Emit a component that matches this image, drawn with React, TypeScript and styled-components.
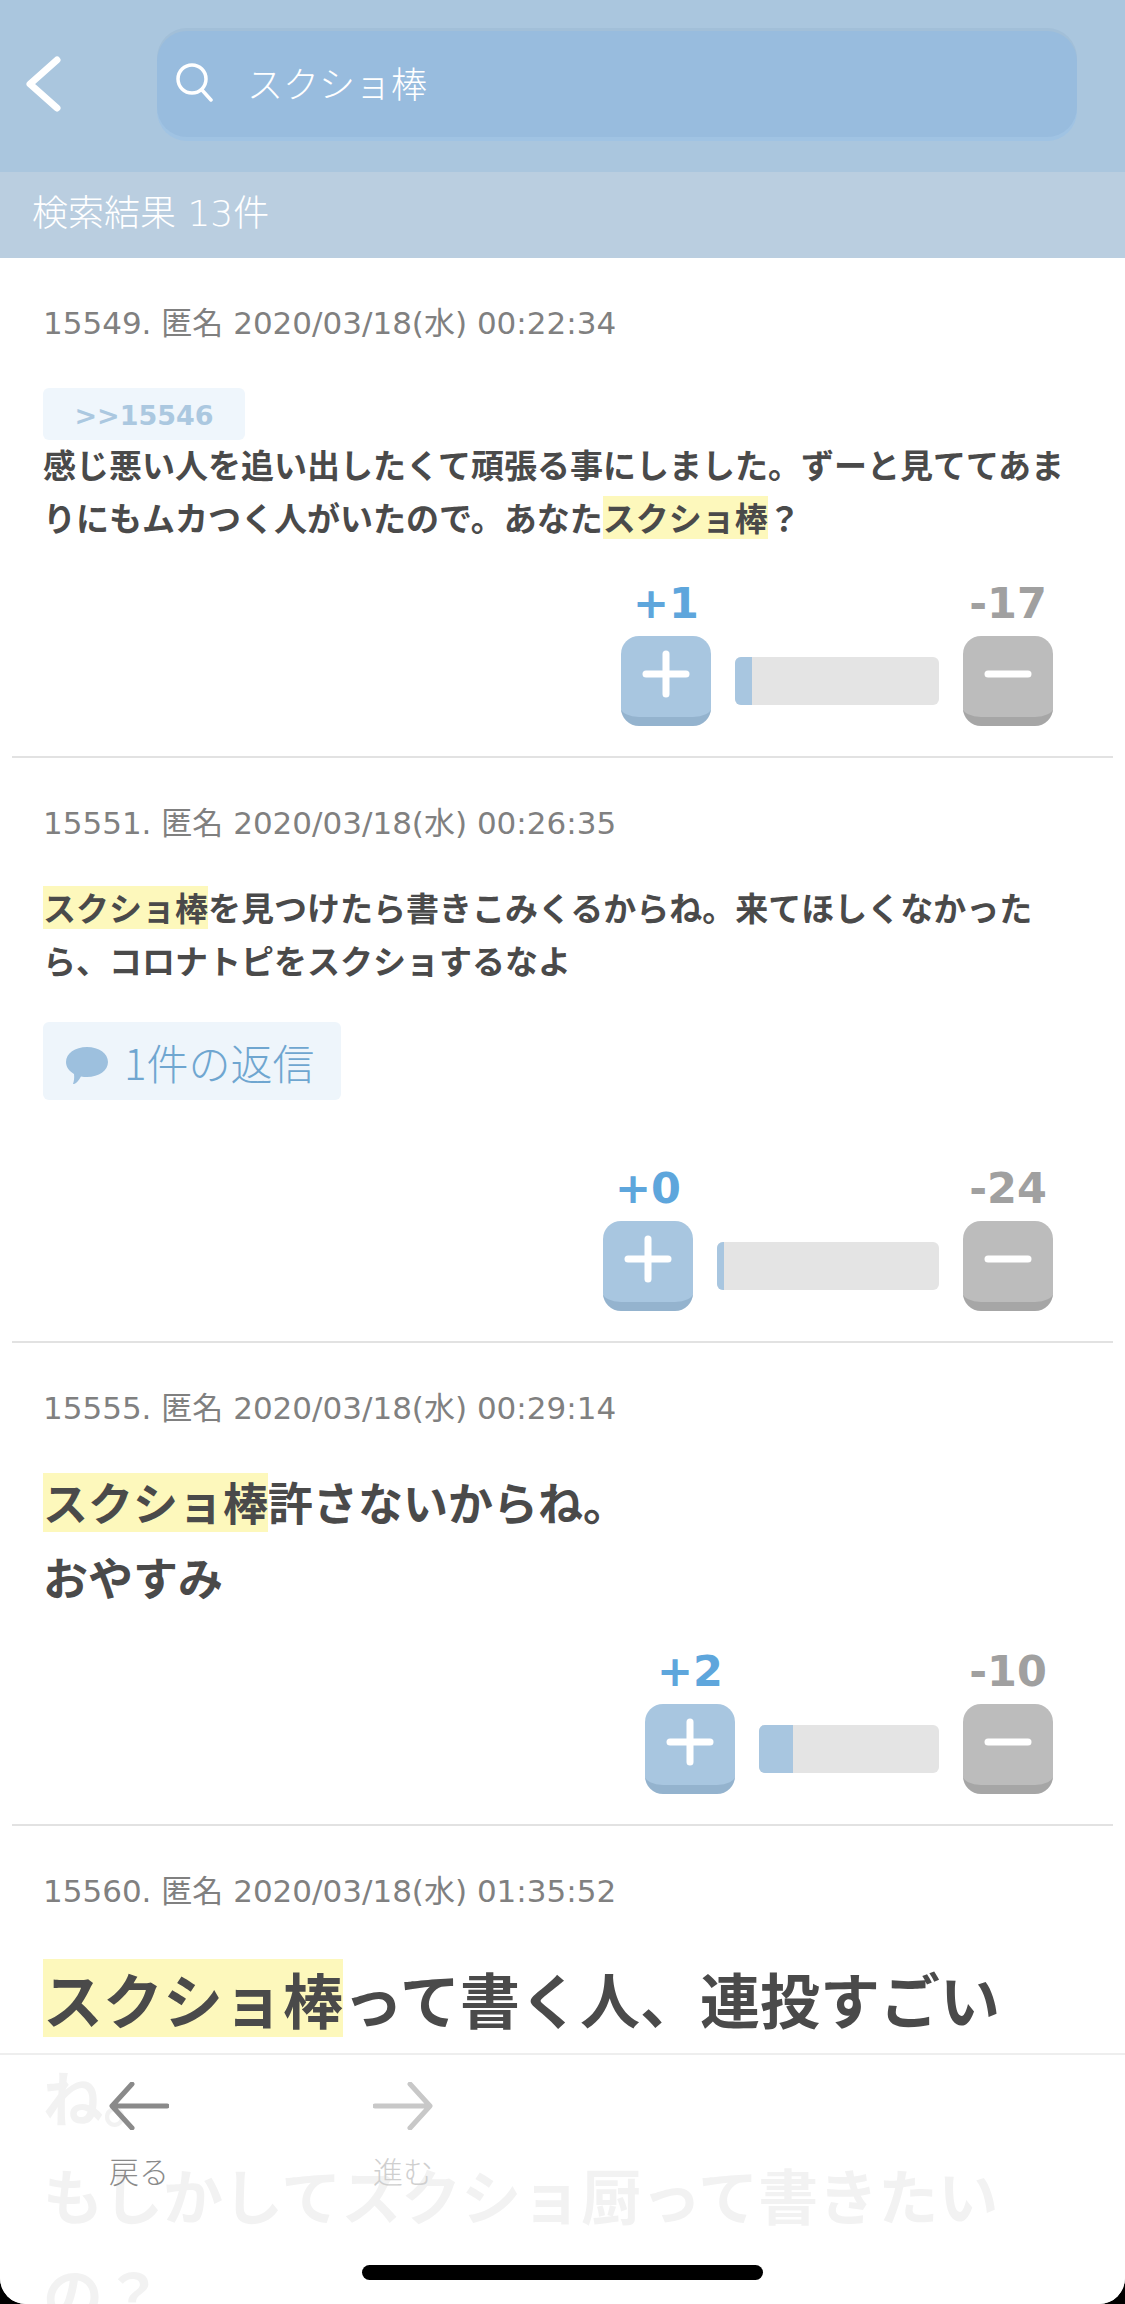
import React from 'react';
import styled, { createGlobalStyle } from 'styled-components';

const GlobalStyle = createGlobalStyle`
  html, body {
    margin: 0;
    padding: 0;
    background: #000;
  }
`;

const latin = `"DejaVu Sans", "Noto Sans CJK JP", sans-serif`;
const jp = `"Noto Sans CJK JP", "Noto Sans", sans-serif`;

const Page = styled.div`
  position: relative;
  width: 1125px;
  height: 2304px;
  overflow: hidden;
  background: #fff;
  border-radius: 0 0 26px 26px;
  font-family: ${jp};
`;

const Header = styled.header`
  display: flex;
  align-items: center;
  height: 172px;
  padding: 0 48px 4px 25px;
  box-sizing: border-box;
  background: #aac6de;
`;

const BackButton = styled.div`
  display: flex;
  width: 132px;
  flex: none;
`;

const SearchBox = styled.div`
  display: flex;
  align-items: center;
  gap: 32px;
  flex: 1;
  height: 106px;
  padding: 0 18px 4px;
  box-sizing: border-box;
  border-radius: 30px;
  background: #98bcde;
  box-shadow: 0 -3px 0 #a2bfd8, 0 4px 0 #a0c3e3;
  color: #fff;
  font-size: 36px;
  font-weight: 300;
`;

const ResultBar = styled.div`
  height: 86px;
  padding-left: 32px;
  background: #bacee0;
  color: #fff;
  font-family: ${latin};
  font-size: 36px;
  font-weight: 300;
  line-height: 84px;
`;

const Post = styled.article<{ $last?: boolean }>`
  margin: 0 12px;
  padding: 43px 31px 30px;
  border-bottom: ${p => (p.$last ? 'none' : '2px solid #e2e2e2')};
`;

const Meta = styled.div`
  color: #808080;
  font-family: ${latin};
  font-size: 31px;
  line-height: 44px;
`;

const Quote = styled.div`
  display: inline-block;
  vertical-align: top;
  width: 202px;
  height: 52px;
  margin-top: 43px;
  border-radius: 6px;
  background: #eff6fc;
  color: #abc8e0;
  font-family: ${latin};
  font-size: 27px;
  font-weight: 700;
  line-height: 56px;
  text-align: center;
`;

const Body = styled.p<{ $size: number; $line: number; $top: number }>`
  margin: ${p => p.$top}px 0 0;
  color: #4a4a4a;
  font-size: ${p => p.$size}px;
  font-weight: 700;
  line-height: ${p => p.$line}px;
`;

const Mark = styled.span`
  display: inline-block;
  background: #fdf8bc;
  line-height: 1.3;
`;

const Reply = styled.div`
  display: flex;
  align-items: center;
  gap: 16px;
  width: 298px;
  height: 78px;
  margin-top: 35px;
  padding-left: 23px;
  box-sizing: border-box;
  border-radius: 6px;
  background: #eef5fb;
  color: #6fa6d0;
  font-size: 42px;
  font-weight: 300;
`;

const ReplyIcon = styled.svg`
  margin-top: 10px;
  flex: none;
`;

const Vote = styled.div<{ $top: number }>`
  display: flex;
  justify-content: flex-end;
  gap: 24px;
  margin-top: ${p => p.$top}px;
  padding-right: 29px;
`;

const VoteSide = styled.div`
  display: flex;
  flex-direction: column;
  align-items: center;
  gap: 13px;
`;

const Count = styled.div<{ $minus?: boolean }>`
  color: ${p => (p.$minus ? '#a0a0a0' : '#5ea6dc')};
  font-family: ${latin};
  font-size: 43px;
  font-weight: 700;
  line-height: 40px;
  white-space: nowrap;
`;

const VoteButton = styled.div<{ $minus?: boolean }>`
  display: flex;
  align-items: center;
  justify-content: center;
  width: 90px;
  height: 90px;
  padding-bottom: 5px;
  box-sizing: border-box;
  border-radius: 18px;
  background: ${p => (p.$minus ? '#bcbcbc' : '#a8c6e0')};
  border-bottom: 9px solid ${p => (p.$minus ? '#a6a6a6' : '#94b3ce')};
`;

const Bar = styled.div<{ $width: number }>`
  align-self: flex-end;
  width: ${p => p.$width}px;
  height: 48px;
  margin-bottom: 21px;
  overflow: hidden;
  border-radius: 6px;
  background: #e4e4e4;
`;

const BarFill = styled.div`
  height: 100%;
  background: #a8c6e0;
`;

const Footer = styled.footer`
  position: absolute;
  left: 0;
  right: 0;
  bottom: 0;
  display: flex;
  gap: 204px;
  height: 251px;
  padding: 27px 0 0 109px;
  box-sizing: border-box;
  border-top: 2px solid #eeeeee;
  background: rgba(255, 255, 255, 0.93);
`;

const NavItem = styled.div<{ $off?: boolean }>`
  display: flex;
  flex-direction: column;
  align-items: center;
  gap: 20px;
  width: 60px;
  color: ${p => (p.$off ? '#cfcfcf' : '#8a8a8a')};
  font-size: 30px;
  font-weight: 300;
  line-height: 40px;
`;

const HomeBar = styled.div`
  position: absolute;
  left: 362px;
  bottom: 24px;
  width: 401px;
  height: 15px;
  border-radius: 8px;
  background: #000;
`;

const VoteIcon = ({ minus }: { minus?: boolean }) => (
  <svg width="48" height="48" viewBox="0 0 48 48" fill="none" stroke="#fff" strokeWidth="7" strokeLinecap="round">
    <path d="M4 24h40" />
    {!minus && <path d="M24 4v40" />}
  </svg>
);

type VoteData = { up: string; down: string; bar: number; fill: number };

const Votes = ({ up, down, bar, fill, top }: VoteData & { top: number }) => (
  <Vote $top={top}>
    <VoteSide>
      <Count>{up}</Count>
      <VoteButton>
        <VoteIcon />
      </VoteButton>
    </VoteSide>
    <Bar $width={bar}>
      <BarFill style={{ width: `${fill}px` }} />
    </Bar>
    <VoteSide>
      <Count $minus>{down}</Count>
      <VoteButton $minus>
        <VoteIcon minus />
      </VoteButton>
    </VoteSide>
  </Vote>
);

const App = () => {
  return (
    <Page>
      <GlobalStyle />
      <Header>
        <BackButton>
          <svg width="36" height="56" viewBox="0 0 36 56" fill="none" stroke="#fff" strokeWidth="7" strokeLinecap="round" strokeLinejoin="round">
            <path d="M32 4L5 28l27 24" />
          </svg>
        </BackButton>
        <SearchBox>
          <svg width="40" height="40" viewBox="0 0 40 40" fill="none" stroke="#fff" strokeWidth="3.5" strokeLinecap="round">
            <circle cx="17" cy="17" r="14" />
            <path d="M27 28l9 10" />
          </svg>
          <span>スクショ棒</span>
        </SearchBox>
      </Header>
      <ResultBar>検索結果 13件</ResultBar>

      <Post>
        <Meta>15549. 匿名 2020/03/18(水) 00:22:34</Meta>
        <Quote>&gt;&gt;15546</Quote>
        <Body $size={33} $line={53} $top={-2}>
          感じ悪い人を追い出したくて頑張る事にしました。ずーと見ててあまりにもムカつく人がいたので。あなた<Mark>スクショ棒</Mark>？
        </Body>
        <Votes up="+1" down="-17" bar={204} fill={17} top={39} />
      </Post>

      <Post>
        <Meta>15551. 匿名 2020/03/18(水) 00:26:35</Meta>
        <Body $size={33} $line={53} $top={36}>
          <Mark>スクショ棒</Mark>を見つけたら書きこみくるからね。来てほしくなかったら、コロナトピをスクショするなよ
        </Body>
        <Reply>
          <ReplyIcon width="42" height="38" viewBox="0 0 42 38" fill="#9dc0de">
            <path d="M21 0C33 0 42 6.500 42 15S33 30 21 30c-2 0-4-.2-6-.6C13 33 10 37 7 37c1-3 1.500-6 1-10C3 24 0 20 0 15 0 6.500 9 0 21 0z" />
          </ReplyIcon>
          <span>1件の返信</span>
        </Reply>
        <Votes up="+0" down="-24" bar={222} fill={7} top={68} />
      </Post>

      <Post>
        <Meta>15555. 匿名 2020/03/18(水) 00:29:14</Meta>
        <Body $size={45} $line={75} $top={34}>
          <Mark>スクショ棒</Mark>許さないからね。
          <br />
          おやすみ
        </Body>
        <Votes up="+2" down="-10" bar={180} fill={34} top={37} />
      </Post>

      <Post $last>
        <Meta>15560. 匿名 2020/03/18(水) 01:35:52</Meta>
        <Body $size={60} $line={98} $top={36}>
          <Mark>スクショ棒</Mark>って書く人、連投すごいね。
          <br />
          もしかしてスクショ厨って書きたいの？
        </Body>
      </Post>

      <Footer>
        <NavItem>
          <svg width="60" height="48" viewBox="0 0 60 48" fill="none" stroke="#8a8a8a" strokeWidth="5" strokeLinecap="round" strokeLinejoin="round">
            <path d="M23 2L3 24l20 22M4 24h54" />
          </svg>
          <span>戻る</span>
        </NavItem>
        <NavItem $off>
          <svg width="60" height="48" viewBox="0 0 60 48" fill="none" stroke="#c8c8c8" strokeWidth="5" strokeLinecap="round" strokeLinejoin="round">
            <path d="M37 2l20 22-20 22M56 24H2" />
          </svg>
          <span>進む</span>
        </NavItem>
      </Footer>
      <HomeBar />
    </Page>
  );
};

export default App;
